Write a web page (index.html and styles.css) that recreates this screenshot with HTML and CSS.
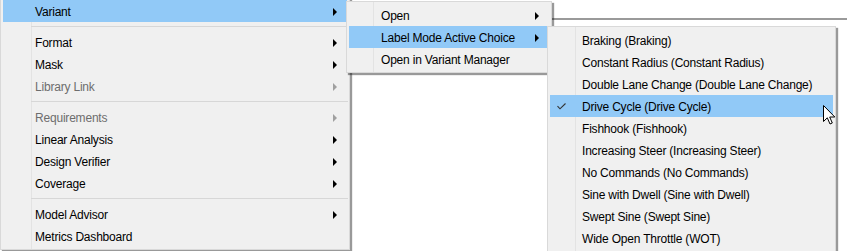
FILE: index.html
```html
<!DOCTYPE html>
<html lang="en">
<head>
  <meta charset="UTF-8" />
  <meta name="viewport" content="width=device-width, initial-scale=1.0"/>
  <title>Variant Context Menu</title>
  <link rel="stylesheet" href="styles.css">
</head>
<body>
  <!-- window behind the popup menus -->
  <div class="canvas"></div>

  <div class="menu menu-main">
    <div class="item active"><span class="label">Variant</span><span class="arrow"></span></div>
    <div class="sep"></div>
    <div class="item"><span class="label">Format</span><span class="arrow"></span></div>
    <div class="item"><span class="label">Mask</span><span class="arrow"></span></div>
    <div class="item disabled"><span class="label">Library Link</span><span class="arrow"></span></div>
    <div class="sep"></div>
    <div class="item disabled"><span class="label">Requirements</span><span class="arrow"></span></div>
    <div class="item"><span class="label">Linear Analysis</span><span class="arrow"></span></div>
    <div class="item"><span class="label">Design Verifier</span><span class="arrow"></span></div>
    <div class="item"><span class="label">Coverage</span><span class="arrow"></span></div>
    <div class="sep"></div>
    <div class="item"><span class="label">Model Advisor</span><span class="arrow"></span></div>
    <div class="item"><span class="label">Metrics Dashboard</span></div>
  </div>

  <div class="menu menu-variant">
    <div class="item"><span class="label">Open</span><span class="arrow"></span></div>
    <div class="item active"><span class="label">Label Mode Active Choice</span><span class="arrow"></span></div>
    <div class="item"><span class="label">Open in Variant Manager</span></div>
  </div>

  <div class="menu menu-choices">
    <div class="item"><span class="label">Braking (Braking)</span></div>
    <div class="item"><span class="label">Constant Radius (Constant Radius)</span></div>
    <div class="item"><span class="label">Double Lane Change (Double Lane Change)</span></div>
    <div class="item active">
      <svg class="check" width="9" height="7" viewBox="0 0 9 7"><polyline points="0.5,3.2 3,5.8 8.5,0.5" fill="none" stroke="#333" stroke-width="1.1"/></svg>
      <span class="label">Drive Cycle (Drive Cycle)</span>
    </div>
    <div class="item"><span class="label">Fishhook (Fishhook)</span></div>
    <div class="item"><span class="label">Increasing Steer (Increasing Steer)</span></div>
    <div class="item"><span class="label">No Commands (No Commands)</span></div>
    <div class="item"><span class="label">Sine with Dwell (Sine with Dwell)</span></div>
    <div class="item"><span class="label">Swept Sine (Swept Sine)</span></div>
    <div class="item"><span class="label">Wide Open Throttle (WOT)</span></div>
  </div>

  <!-- mouse pointer over the checked choice -->
  <svg class="cursor" width="13" height="20" viewBox="0 0 13 20">
    <path d="M0.5 0.5 L0.5 16.5 L4.3 12.8 L7 19 L9.3 18 L6.7 12 L11.8 12 Z" fill="#fff" stroke="#000" stroke-width="1" stroke-linejoin="miter"/>
  </svg>
</body>
</html>
```

FILE: styles.css
```css
body {
  margin: 0;
  background: #fff;
  font-family: "Liberation Sans", Arial, sans-serif;
  font-size: 12px;
  letter-spacing: -0.2px;
  color: #000;
  height: 251px;
  overflow: hidden;
  position: relative;
}
.canvas {
  margin-top: 18px;
  border-top: 2px solid #9a9a9a;
}
.menu {
  position: absolute;
  box-sizing: border-box;
  border: 1px solid #d9d9d9;
  padding: 2px;
  background: linear-gradient(#e3e3e3, #e3e3e3) 27px 0 / 1px 100% no-repeat #f0f0f0;
  box-shadow: 2px 2px 1px rgba(0,0,0,0.4);
}
.menu-main {
  left: 0;
  top: -3px;
  width: 350px;
  background-position: 30px 0;
}
.menu-variant {
  left: 346px;
  top: 1px;
  width: 206px;
  background-position: 26px 0;
}
.menu-choices {
  left: 547px;
  top: 26px;
  width: 289px;
}
.item {
  display: flex;
  align-items: center;
  box-sizing: border-box;
  height: 22px;
  padding: 1px 10px 0 32px;
}
.item.active {
  background: #91c9f7;
}
.item.disabled {
  color: #6d6d6d;
}
.label {
  flex: 1;
  white-space: nowrap;
}
.arrow {
  width: 0;
  height: 0;
  border-left: 4px solid #000;
  border-top: 4px solid transparent;
  border-bottom: 4px solid transparent;
}
.disabled .arrow {
  border-left-color: #a0a0a0;
}
.sep {
  height: 1px;
  margin: 4px -1px 4px 28px;
  background: #d7d7d7;
}
.check {
  flex: none;
  margin-left: -25px;
  margin-right: 16px;
}
.cursor {
  position: absolute;
  left: 823px;
  top: 105px;
}
```
